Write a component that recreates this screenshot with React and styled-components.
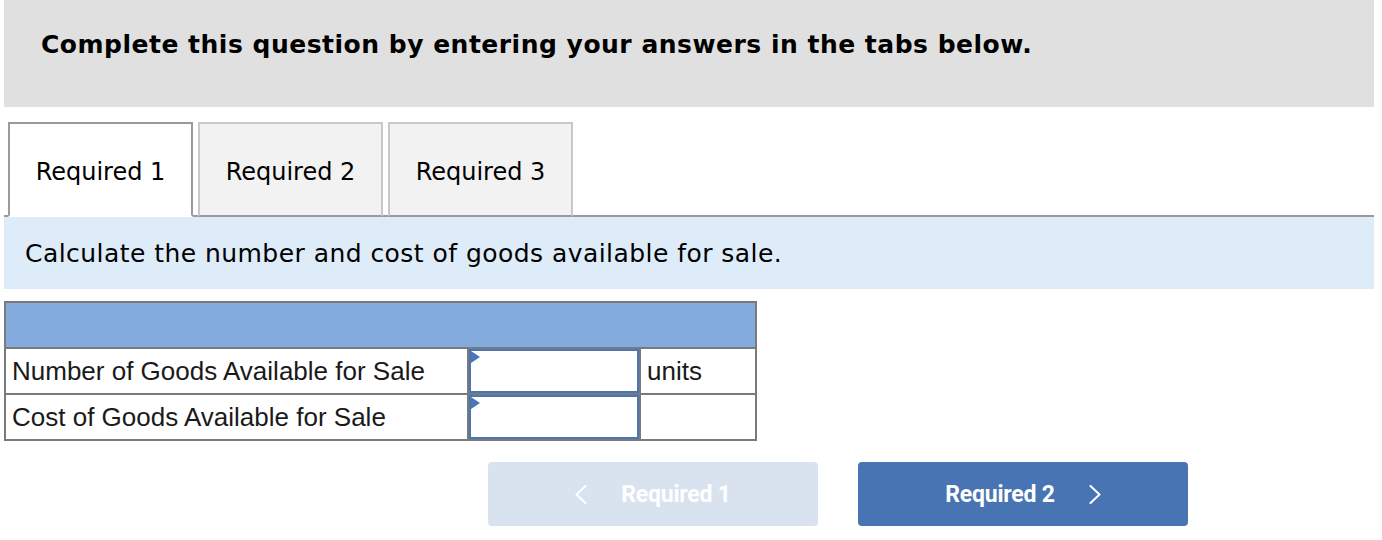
import React from 'react';
import styled, {createGlobalStyle} from 'styled-components';

const GlobalStyle = createGlobalStyle`
body {
  margin: 0;
  background: #fff;
  font-family: "DejaVu Sans", Verdana, sans-serif;
}
`;

const Page = styled.div`
padding: 0 8px 0 4px;
`;

const Banner = styled.div`
height: 107px;
box-sizing: border-box;
background-color: #e0e0e0;
padding: 30px 37px 0;
font-weight: bold;
font-size: 25px;
letter-spacing: 0.5px;
color: #000;
`;

const TabRow = styled.div`
display: flex;
gap: 5px;
margin-top: 15px;
padding-left: 4px;
border-bottom: 2px solid #9a9a9a;
`;

const Tab = styled.div`
width: 185px;
height: 95px;
box-sizing: border-box;
display: flex;
align-items: center;
justify-content: center;
padding-top: 4px;
font-size: 24px;
color: #000;
margin-bottom: -2px;
background-color: ${props => props.active ? '#fff' : '#f2f2f2'};
border: 2px solid ${props => props.active ? '#9a9a9a' : '#c8c8c8'};
border-bottom: 2px solid ${props => props.active ? '#fff' : '#9a9a9a'};
`;

const Prompt = styled.div`
height: 72px;
display: flex;
align-items: center;
padding-left: 21px;
background-color: #deebf8;
font-size: 25px;
letter-spacing: 0.45px;
color: #000;
`;

const Grid = styled.table`
margin-top: 12px;
width: 753px;
border-collapse: collapse;
font-family: "Liberation Sans", Arial, sans-serif;
font-size: 26px;
color: #1a1a1a;
`;

const HeadCell = styled.td`
height: 44px;
padding: 0;
background-color: #83abde;
border: 2px solid #7a7a7a;
`;

const Cell = styled.td`
height: 44px;
padding: 0 0 0 6px;
border: 2px solid #7a7a7a;
width: ${props => props.width}px;
`;

const InputCell = styled.td`
height: 44px;
padding: 0;
border: 2px solid #7a7a7a;
width: 170px;
position: relative;
`;

const Entry = styled.div`
height: 44px;
box-sizing: border-box;
border: 2px solid #4a76b6;
background: #fff;
`;

const Flag = styled.span`
position: absolute;
left: 2px;
top: 2px;
width: 0;
height: 0;
border-top: 6px solid transparent;
border-bottom: 6px solid transparent;
border-left: 9px solid #4a76b6;
`;

const ButtonRow = styled.div`
display: flex;
gap: 40px;
margin-top: 21px;
padding-left: 484px;
`;

const NavButton = styled.div`
width: 330px;
height: 64px;
border-radius: 4px;
display: flex;
align-items: center;
justify-content: center;
gap: 34px;
background-color: ${props => props.disabled ? '#d9e3ef' : '#4874b3'};
color: #fff;
font-family: Roboto, "Liberation Sans", sans-serif;
font-weight: bold;
font-size: 23px;
letter-spacing: -0.2px;
`;

const Chevron = ({dir}) => (
  <svg width="12" height="19" viewBox="0 0 12 19" fill="none">
    <path
      d={dir === 'left' ? 'M10.5 1 L1.5 9.5 L10.5 18' : 'M1.5 1 L10.5 9.5 L1.5 18'}
      stroke="#fff"
      strokeWidth="2"
      strokeLinecap="round"
      strokeLinejoin="round"
    />
  </svg>
);

const rows = [
  {label: 'Number of Goods Available for Sale', unit: 'units'},
  {label: 'Cost of Goods Available for Sale', unit: ''},
];

const App = () => (
  <Page>
    <GlobalStyle />
    <Banner>Complete this question by entering your answers in the tabs below.</Banner>
    <TabRow>
      <Tab active>Required 1</Tab>
      <Tab>Required 2</Tab>
      <Tab>Required 3</Tab>
    </TabRow>
    <Prompt>Calculate the number and cost of goods available for sale.</Prompt>
    <Grid>
      <tbody>
        <tr>
          <HeadCell colSpan={3} />
        </tr>
        {rows.map(r => (
          <tr key={r.label}>
            <Cell width={455}>{r.label}</Cell>
            <InputCell>
              <Entry />
              <Flag />
            </InputCell>
            <Cell>{r.unit}</Cell>
          </tr>
        ))}
      </tbody>
    </Grid>
    <ButtonRow>
      <NavButton disabled>
        <Chevron dir="left" />
        <span>Required 1</span>
      </NavButton>
      <NavButton>
        <span>Required 2</span>
        <Chevron dir="right" />
      </NavButton>
    </ButtonRow>
  </Page>
);

export default App;
